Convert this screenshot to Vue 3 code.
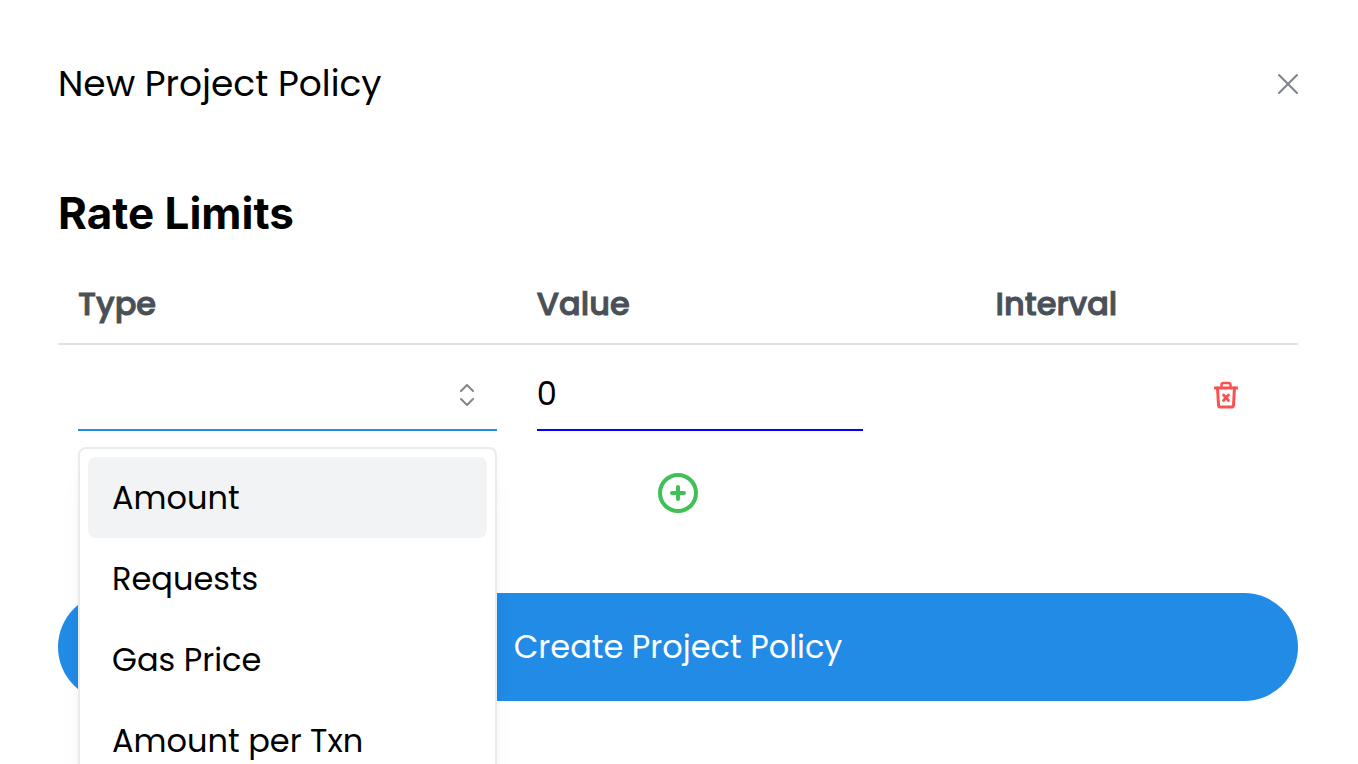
<script setup>
import { ref } from 'vue'

const types = ['Amount', 'Requests', 'Gas Price', 'Amount per Txn']
const selected = ref('')
const active = ref(0)
const open = ref(true)
const value = ref('0')

function choose(type) {
  selected.value = type
  open.value = false
}
</script>

<template>
  <main class="dialog" role="dialog" aria-labelledby="dialog-title">
    <header class="dialog-header">
      <h1 id="dialog-title">New Project Policy</h1>
      <button class="icon-button" type="button" aria-label="Close">
        <svg width="20" height="20" viewBox="0 0 20 20" fill="none" stroke="#7d848b" stroke-width="2" stroke-linecap="round">
          <path d="M1 1l18 18M19 1L1 19" />
        </svg>
      </button>
    </header>

    <h2>Rate Limits</h2>

    <table>
      <colgroup>
        <col class="col-wide" />
        <col class="col-wide" />
        <col />
        <col class="col-action" />
      </colgroup>
      <thead>
        <tr>
          <th id="type-head" scope="col">Type</th>
          <th id="value-head" scope="col">Value</th>
          <th scope="col">Interval</th>
          <td></td>
        </tr>
      </thead>
      <tbody>
        <tr>
          <td>
            <div class="select">
              <input
                v-model="selected"
                class="field type-field"
                type="text"
                role="combobox"
                readonly
                aria-labelledby="type-head"
                aria-controls="type-list"
                :aria-expanded="open"
                @click="open = !open"
              />
              <svg class="chevrons" width="14" height="22" viewBox="0 0 14 22" fill="none" stroke="#868686" stroke-width="2" stroke-linecap="round" stroke-linejoin="round">
                <path d="M1 7l6-6 6 6M1 15l6 6 6-6" />
              </svg>
              <ul v-if="open" id="type-list" class="menu" role="listbox" aria-labelledby="type-head">
                <li
                  v-for="(type, i) in types"
                  :key="type"
                  role="option"
                  :class="{ active: i === active }"
                  :aria-selected="type === selected"
                  @mouseenter="active = i"
                  @click="choose(type)"
                >
                  {{ type }}
                </li>
              </ul>
            </div>
          </td>
          <td>
            <input v-model="value" class="field value-field" type="text" inputmode="numeric" aria-labelledby="value-head" />
          </td>
          <td></td>
          <td>
            <button class="icon-button" type="button" aria-label="Delete limit">
              <svg width="24" height="28" viewBox="0 0 24 28" fill="none" stroke="#fa5252" stroke-width="3" stroke-linecap="round" stroke-linejoin="round">
                <path d="M0 7h24" stroke-linecap="butt" />
                <path d="M3.500 7l1 17q.2 2 2 2h11q1.800 0 2-2l1-17" />
                <path d="M7.500 6V4q0-2 2-2h5q2 0 2 2v2" stroke-width="2.500" />
                <path d="M9.500 14l5 5.500M14.500 14l-5 5.500" stroke-width="2.800" />
              </svg>
            </button>
          </td>
        </tr>
      </tbody>
    </table>

    <button class="icon-button add" type="button" aria-label="Add limit">
      <svg width="40" height="40" viewBox="0 0 40 40" fill="none" stroke="#40c057" stroke-width="4" stroke-linecap="round">
        <circle cx="20" cy="20" r="18" />
        <path d="M20 14v12M14 20h12" />
      </svg>
    </button>

    <button class="submit" type="button">Create Project Policy</button>
  </main>
</template>

<style>
body {
  background: #fff;
}
</style>

<style scoped>
* {
  box-sizing: border-box;
}

.dialog {
  height: 100vh;
  overflow: hidden;
  padding: 56px 60px 0 58px;
  color: #000;
  font: 32px/48px Poppins, Inter, sans-serif;
}

.dialog-header {
  display: flex;
  align-items: center;
  justify-content: space-between;
}

h1 {
  margin: 0;
  font-size: 36px;
  font-weight: 400;
  line-height: 56px;
}

h2 {
  margin: 73px 0 25px;
  font-family: Inter, sans-serif;
  font-size: 44px;
  font-weight: 700;
  line-height: 56px;
}

.icon-button {
  display: block;
  padding: 0;
  border: 0;
  background: none;
  cursor: pointer;
}

.icon-button svg {
  display: block;
}

table {
  width: 100%;
  table-layout: fixed;
  border-collapse: separate;
  border-spacing: 0;
}

.col-wide {
  width: 37%;
}

.col-action {
  width: 104px;
}

th {
  padding: 14px 20px 15px;
  color: #495057;
  font-size: 32px;
  font-weight: 500;
  text-align: left;
  -webkit-text-stroke: 1px #495057;
}

thead th,
thead td {
  border-bottom: 2px solid #dee2e6;
}

tbody td {
  padding: 14px 20px;
}

.select {
  position: relative;
}

.field {
  display: block;
  width: 100%;
  height: 72px;
  padding: 0;
  border: 0;
  border-bottom: 2px solid #0000ff;
  border-radius: 0;
  outline: 0;
  background: none;
  color: #000;
  font: inherit;
}

.type-field {
  border-bottom-color: #228be6;
}

.value-field {
  width: 78%;
}

.chevrons {
  position: absolute;
  top: 25px;
  right: 23px;
  pointer-events: none;
}

.menu {
  position: absolute;
  z-index: 1;
  top: 88px;
  left: 0;
  width: 100%;
  margin: 0;
  padding: 8px;
  border: 2px solid #e9ecef;
  border-radius: 8px;
  background: #fff;
  box-shadow: 0 2px 6px rgba(0, 0, 0, 0.03), 0 20px 30px -10px rgba(0, 0, 0, 0.05), 0 14px 14px -10px rgba(0, 0, 0, 0.04);
  list-style: none;
}

.menu li {
  padding: 17px 24px 16px;
  border-radius: 8px;
  cursor: pointer;
}

.menu li.active {
  background: #f1f3f5;
}

.add {
  margin: 28px auto 80px;
}

.submit {
  display: block;
  width: 100%;
  padding: 30px;
  border: 0;
  border-radius: 54px;
  background: #228be6;
  color: #fff;
  font: inherit;
  cursor: pointer;
}
</style>
